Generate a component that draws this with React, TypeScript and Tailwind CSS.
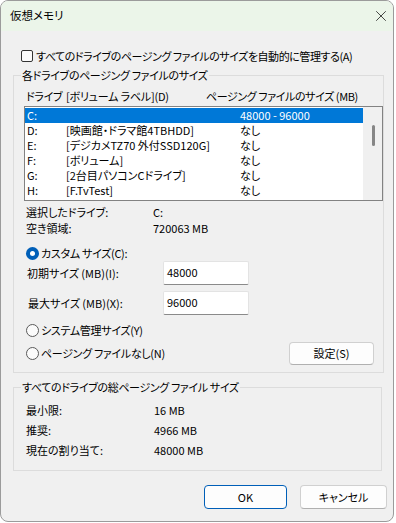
import { X } from "lucide-react";

const drives = [
  { letter: "C:", label: "", size: "48000 - 96000", selected: true },
  { letter: "D:", label: "[映画館・ドラマ館4TBHDD]", size: "なし" },
  { letter: "E:", label: "[デジカメTZ70 外付SSD120G]", size: "なし" },
  { letter: "F:", label: "[ボリューム]", size: "なし" },
  { letter: "G:", label: "[2台目パソコンCドライブ]", size: "なし" },
  { letter: "H:", label: "[F.TvTest]", size: "なし" },
];

function Radio({ checked }: { checked?: boolean }) {
  if (checked) {
    return (
      <span className="w-[13px] h-[13px] rounded-full bg-[#005fb8] flex items-center justify-center shrink-0">
        <span className="w-[5px] h-[5px] rounded-full bg-white" />
      </span>
    );
  }
  return <span className="w-[13px] h-[13px] rounded-full border border-[#5a5a5a] bg-[#fbfbfb] shrink-0" />;
}

function NumberBox({ value }: { value: string }) {
  return (
    <div className="w-[86px] h-[24px] bg-white border border-[#e3e3e3] border-b-[#8a8a8a] rounded-[2px] pl-[3px] pt-[3px] leading-[14px]">
      {value}
    </div>
  );
}

export default function App() {
  return (
    <div className="w-[396px] h-[523px] bg-white font-['Noto_Sans_CJK_JP','Noto_Sans',sans-serif] [font-feature-settings:'palt'] text-[11px] text-black whitespace-nowrap">
      <div className="w-[394px] h-[522px] border border-[#9b9b9b] rounded-[8px] overflow-hidden bg-[#f0f0f0] flex flex-col">
        {/* title bar */}
        <div className="h-[30px] shrink-0 bg-[#ebf5e9] flex items-center justify-between pl-[9px] pr-[3px]">
          <span className="text-[11.5px]">仮想メモリ</span>
          <X className="w-[18px] h-[18px] text-[#222]" strokeWidth={1.1} />
        </div>

        <div className="flex flex-col px-[12px]">
          <label className="mt-[18px] h-[14px] flex items-center pl-[8px] gap-[3px]">
            <span className="w-[12px] h-[12px] border border-[#333] rounded-[2px] bg-[#fbfbfb]" />
            <span className="tracking-[-0.45px]">すべてのドライブのページング ファイルのサイズを自動的に管理する(A)</span>
          </label>

          <fieldset className="mt-[4px] w-[370px] border border-[#dcdcdc]">
            <legend className="ml-[7px] px-[1px] leading-[16px] tracking-[-0.35px]">各ドライブのページング ファイルのサイズ</legend>
            <div className="flex flex-col pb-[8px]">
              <div className="mt-[6px] h-[14px] flex items-center pl-[12px] leading-[14px]">
                <span className="w-[40px] tracking-[-0.3px]">ドライブ</span>
                <span className="w-[140px] tracking-[-0.2px]">[ボリューム ラベル](D)</span>
                <span className="tracking-[-0.4px]">ページング ファイルのサイズ (MB)</span>
              </div>

              <div className="mt-[3px] ml-[10px] w-[359px] h-[95px] border border-[#828282] bg-white flex overflow-hidden">
                <div className="flex-1 pt-[1px]">
                  {drives.map((d) => (
                    <div
                      key={d.letter}
                      className={
                        "h-[15px] flex items-center pl-[2px] leading-[15px] " +
                        (d.selected ? "bg-[#0078d7] text-white" : "")
                      }
                    >
                      <span className="w-[39px]">{d.letter}</span>
                      <span className="w-[174px]">{d.label}</span>
                      <span>{d.size}</span>
                    </div>
                  ))}
                </div>
                <div className="w-[19px] bg-[#f0f0f0] flex justify-center pt-[18px]">
                  <div className="w-[3px] h-[21px] rounded-full bg-[#868686] ml-[1px]" />
                </div>
              </div>

              <div className="mt-[3px] pl-[12px] flex flex-col leading-[16px]">
                <div className="h-[16px] flex">
                  <span className="w-[127px]">選択したドライブ:</span>
                  <span>C:</span>
                </div>
                <div className="h-[16px] flex">
                  <span className="w-[127px]">空き領域:</span>
                  <span>720063 MB</span>
                </div>
              </div>

              <div className="mt-[9px] h-[16px] pl-[12px] flex items-center gap-[2px]">
                <Radio checked />
                <span className="tracking-[-0.3px]">カスタム サイズ(C):</span>
              </div>

              <div className="h-[24px] pl-[13px] flex items-center">
                <span className="w-[136px]">初期サイズ (MB)(I):</span>
                <NumberBox value="48000" />
              </div>
              <div className="mt-[6px] h-[24px] pl-[14px] flex items-center">
                <span className="w-[135px]">最大サイズ (MB)(X):</span>
                <NumberBox value="96000" />
              </div>

              <div className="mt-[7px] h-[16px] pl-[12px] flex items-center gap-[2px]">
                <Radio />
                <span className="tracking-[-0.3px]">システム管理サイズ(Y)</span>
              </div>

              <div className="mt-[4px] h-[22px] pl-[12px] pr-[9px] flex items-center justify-between">
                <div className="flex items-center gap-[2px]">
                  <Radio />
                  <span className="tracking-[-0.3px]">ページング ファイルなし(N)</span>
                </div>
                <button className="w-[85px] h-[23px] bg-[#fdfdfd] border border-[#d0d0d0] border-b-[#b0b0b0] rounded-[4px] leading-[14px]">
                  設定(S)
                </button>
              </div>
            </div>
          </fieldset>

          <fieldset className="mt-[6px] w-[369px] border border-[#dcdcdc]">
            <legend className="ml-[7px] px-[1px] leading-[16px] tracking-[-0.35px]">すべてのドライブの総ページング ファイル サイズ</legend>
            <div className="mt-[5px] pb-[10px] pl-[12px] flex flex-col">
              <div className="h-[20px] flex items-center">
                <span className="w-[128px]">最小限:</span>
                <span>16 MB</span>
              </div>
              <div className="h-[20px] flex items-center">
                <span className="w-[128px]">推奨:</span>
                <span>4966 MB</span>
              </div>
              <div className="h-[20px] flex items-center">
                <span className="w-[128px]">現在の割り当て:</span>
                <span>48000 MB</span>
              </div>
            </div>
          </fieldset>

          <div className="mt-[14px] flex justify-end gap-[13px] -mr-[6px]">
            <button className="w-[83px] h-[24px] bg-[#fdfdfd] border border-[#005fb8] rounded-[4px] leading-[14px]">
              OK
            </button>
            <button className="w-[87px] h-[24px] bg-[#fdfdfd] border border-[#d0d0d0] border-b-[#b0b0b0] rounded-[4px] leading-[14px]">
              キャンセル
            </button>
          </div>
        </div>
      </div>
    </div>
  );
}
